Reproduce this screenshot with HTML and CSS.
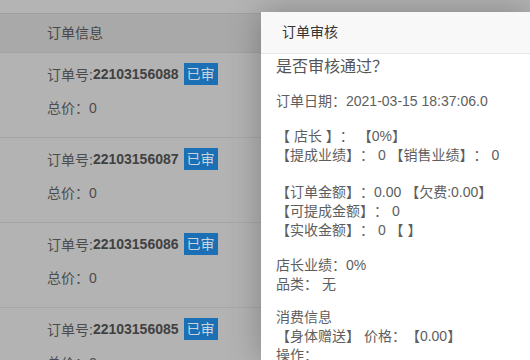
FILE: index.html
```html
<!DOCTYPE html>
<html lang="zh-CN">
<head>
<meta charset="utf-8">
<title>订单审核</title>
<link rel="stylesheet" href="styles.css">
</head>
<body>
<div class="page">
  <div class="topbar"></div>
  <div class="list-head">订单信息</div>
  <div class="order">
    <div class="order-line">订单号:<b>22103156088</b><span class="badge">已审</span></div>
    <div class="price">总价<span class="p">：</span>0</div>
  </div>
  <div class="order">
    <div class="order-line">订单号:<b>22103156087</b><span class="badge">已审</span></div>
    <div class="price">总价<span class="p">：</span>0</div>
  </div>
  <div class="order">
    <div class="order-line">订单号:<b>22103156086</b><span class="badge">已审</span></div>
    <div class="price">总价<span class="p">：</span>0</div>
  </div>
  <div class="order">
    <div class="order-line">订单号:<b>22103156085</b><span class="badge">已审</span></div>
    <div class="price">总价<span class="p">：</span>0</div>
  </div>
</div>

<div class="drawer">
  <div class="drawer-head">订单审核</div>
  <div class="drawer-body">
    <div class="question">是否审核通过<span class="p">？</span></div>
    <div class="date">订单日期<span class="p">：</span>2021-03-15 18:37:06.0</div>
    <div class="group g1">
      <div>【 店长 】<span class="p">：</span> 【0%】</div>
      <div>【提成业绩】<span class="p">：</span> 0 【销售业绩】<span class="p">：</span> 0</div>
    </div>
    <div class="group g2">
      <div>【订单金额】<span class="p">：</span>0.00 【欠费:0.00】</div>
      <div>【可提成金额】<span class="p">：</span> 0</div>
      <div>【实收金额】<span class="p">：</span> 0 【 】</div>
    </div>
    <div class="group g3">
      <div>店长业绩<span class="p">：</span>0%</div>
      <div>品类<span class="p">：</span> 无</div>
    </div>
    <div class="group g4">
      <div>消费信息</div>
      <div>【身体赠送】 价格<span class="p">：</span>【0.00】</div>
      <div>操作<span class="p">：</span></div>
    </div>
  </div>
</div>
</body>
</html>
```

FILE: styles.css
```css
html, body {
  margin: 0;
  padding: 0;
  height: 100%;
  overflow: hidden;
}

body {
  background: #b3b3b3;
  font-family: "Liberation Sans", "Noto Sans CJK SC", sans-serif;
  font-size: 14px;
  color: #4c4c4c;
  position: relative;
  text-spacing-trim: space-all;
}

.p {
  font-family: "Liberation Sans", "Noto Sans CJK TC", sans-serif;
}

.page {
  width: 100%;
}

.topbar {
  height: 13px;
  border-bottom: 1px solid #a0a0a0;
  background: #b4b4b4;
}

.list-head {
  height: 38px;
  line-height: 38px;
  padding-left: 47px;
  background: #a9a9a9;
  border-bottom: 1px solid #a2a2a2;
  color: #474747;
}

.order {
  padding: 10px 0 19px 47px;
  border-bottom: 1px solid #a6a6a6;
}

.order-line {
  display: flex;
  align-items: center;
  height: 22px;
}

.order-line b {
  font-weight: bold;
  color: #414141;
}

.badge {
  margin-left: 5px;
  height: 22px;
  line-height: 22px;
  padding: 0 3px;
  white-space: nowrap;
  background: #1b6fb4;
  color: #c9d3dc;
  font-size: 14px;
}

.price {
  margin-top: 13px;
  height: 20px;
  line-height: 20px;
}

.drawer {
  position: absolute;
  left: 261px;
  top: 12px;
  right: 0;
  bottom: 0;
  background: #fff;
  box-shadow: 0 0 32px rgba(0, 0, 0, 0.28);
}

.drawer-head {
  height: 41px;
  line-height: 41px;
  padding-left: 21px;
  background: #f8f8f8;
  border-bottom: 1px solid #e6e6e6;
  color: #333;
}

.drawer-body {
  padding-left: 15px;
  color: #5e5e5e;
  line-height: 19px;
  white-space: nowrap;
}

.question {
  margin-top: 1px;
  font-size: 16px;
  line-height: 24px;
  color: #555;
}

.date {
  margin-top: 13px;
}

.g1 {
  margin-top: 16px;
}

.g2 {
  margin-top: 18px;
}

.g3 {
  margin-top: 16px;
}

.g4 {
  margin-top: 14px;
}
```
